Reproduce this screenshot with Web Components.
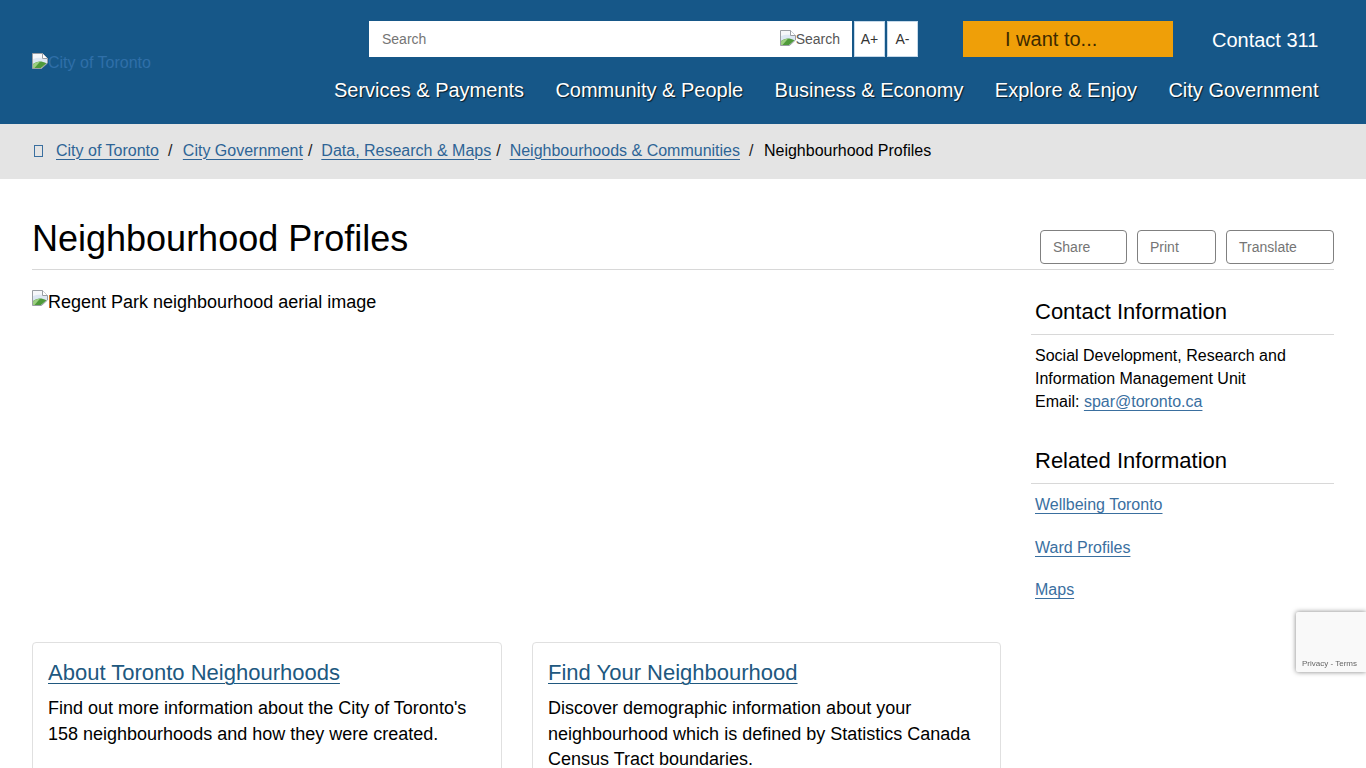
<!DOCTYPE html>
<html lang="en">
<head>
<meta charset="utf-8">
<title>Neighbourhood Profiles</title>
<style>
  html, body { margin: 0; height: 768px; overflow: hidden; background: white; }
  body { font-family: "Liberation Sans", Arial, sans-serif; color: #000; }
</style>
</head>
<body>
<site-header></site-header>
<bread-crumbs></bread-crumbs>
<page-title heading="Neighbourhood Profiles"></page-title>
<page-main>
  <broken-image slot="hero" alt="Regent Park neighbourhood aerial image"></broken-image>
  <info-card slot="cards" heading="About Toronto Neighourhoods">Find out more information about the City of Toronto's 158 neighbourhoods and how they were created.</info-card>
  <info-card slot="cards" heading="Find Your Neighbourhood">Discover demographic information about your neighbourhood which is defined by Statistics Canada Census Tract boundaries.</info-card>
  <side-block slot="side" heading="Contact Information">
    <div class="contact">Social Development, Research and Information Management Unit<br>Email: <a href="#" style="color:#3a6f9f;text-decoration-thickness:1px;text-underline-offset:3px">spar@toronto.ca</a></div>
  </side-block>
  <side-block slot="side" heading="Related Information">
    <side-link>Wellbeing Toronto</side-link>
    <side-link>Ward Profiles</side-link>
    <side-link>Maps</side-link>
  </side-block>
</page-main>
<recaptcha-badge></recaptcha-badge>

<script>
class BrokenImage extends HTMLElement {
  constructor() {
    super();
    this.attachShadow({mode: 'open'});
  }

  connectedCallback() {
    this.shadowRoot.innerHTML = `
      <style>
        :host { display: inline-block; white-space: nowrap; }
        svg { width: 16px; height: 16px; vertical-align: var(--icon-shift, 2px); margin-top: -6px; }
      </style>
      <svg viewBox="0 0 16 16">
        <path d="M0.5 0.5H10.5L15.5 5.5V10L9.5 15.5H0.5Z" fill="#dde7f3" stroke="#9a9ea4"/>
        <path d="M1 1H10V5.5H15V6C11 4.5 6 4 1 6Z" fill="#f6f7fa"/>
        <path d="M10.5 0.5V5.5H15.5" fill="#fff" stroke="#9a9ea4"/>
        <path d="M1 15V11C5 8 9 7.5 14.5 10.2L9 15Z" fill="#4f9a3a"/>
        <path d="M1 11.5C3 9.8 5 9 8 8.8L2.5 15H1Z" fill="#9ccf80"/>
      </svg>${this.getAttribute('alt')}
    `;
  }
}

class SiteHeader extends HTMLElement {
  constructor() {
    super();
    this.attachShadow({mode: 'open'});
  }

  connectedCallback() {
    this.shadowRoot.innerHTML = `
      <style>
        :host { display: flex; height: 124px; background: #165788; box-sizing: border-box; padding: 21px 32px 0; }
        .logo { margin-top: 32px; font-size: 16px; color: #2f6fa8; width: 302px; flex: none; line-height: 20px; --icon-shift: -1px; }
        .right { flex: 1; min-width: 0; }
        .top { display: flex; height: 36px; padding-left: 35px; }
        .search { width: 483px; flex: none; background: white; display: flex; align-items: center; justify-content: space-between; box-sizing: border-box; padding: 0 12px 0 13px; font-size: 14px; color: #757575; }
        .search broken-image { color: #555; --icon-shift: -2px; margin-left: -1px; }
        .search svg { margin-left: -1px; }
        .size { width: 31px; flex: none; margin-left: 2px; background: white; border: 1px solid #c5d9ea; box-sizing: border-box; display: flex; align-items: center; justify-content: center; font-size: 14px; color: #333; }
        .want { width: 210px; flex: none; margin-left: 45px; background: #ef9f08; box-sizing: border-box; padding-left: 42px; font-size: 20px; line-height: 36px; color: #3d2a00; }
        .contact { margin-left: 39px; font-size: 20px; line-height: 38px; color: white; }
        nav { display: flex; gap: 31.3px; margin-top: 20px; font-size: 20px; line-height: 26px; color: white; text-shadow: 1px 1px 1px rgba(0,0,0,.7); white-space: nowrap; }
      </style>
      <div class="logo"><broken-image alt="City of Toronto"></broken-image></div>
      <div class="right">
        <div class="top">
          <div class="search"><span>Search</span><broken-image alt="Search"></broken-image></div>
          <div class="size">A+</div>
          <div class="size">A-</div>
          <div class="want">I want to...</div>
          <div class="contact">Contact 311</div>
        </div>
        <nav>
          <span>Services &amp; Payments</span>
          <span>Community &amp; People</span>
          <span>Business &amp; Economy</span>
          <span>Explore &amp; Enjoy</span>
          <span>City Government</span>
        </nav>
      </div>
    `;
  }
}

class BreadCrumbs extends HTMLElement {
  constructor() {
    super();
    this.attachShadow({mode: 'open'});
  }

  connectedCallback() {
    this.shadowRoot.innerHTML = `
      <style>
        :host { display: flex; align-items: center; height: 53px; padding-bottom: 2px; background: #e4e4e4; padding-left: 34px; font-size: 16px; white-space: nowrap; color: #222; }
        .home { width: 7px; height: 10px; border: 1px solid #3a6f9f; margin-right: 13px; flex: none; }
        a { color: #2e6496; text-decoration: underline; text-decoration-thickness: 1px; text-underline-offset: 3px; }
        .sep { margin-left: 9px; margin-right: 10.5px; }
        .tight { margin-left: 5px; margin-right: 9px; }
        .now { color: #000; }
      </style>
      <span class="home"></span>
      <a href="#">City of Toronto</a><span class="sep">/</span>
      <a href="#">City Government</a><span class="tight">/</span>
      <a href="#">Data, Research &amp; Maps</a><span class="tight">/</span>
      <a href="#">Neighbourhoods &amp; Communities</a><span class="sep">/</span>
      <span class="now">Neighbourhood Profiles</span>
    `;
  }
}

class PageTitle extends HTMLElement {
  constructor() {
    super();
    this.attachShadow({mode: 'open'});
  }

  connectedCallback() {
    this.shadowRoot.innerHTML = `
      <style>
        :host { display: flex; justify-content: space-between; margin: 0 32px; height: 91px; box-sizing: border-box; border-bottom: 1px solid #d8d8d8; padding-top: 39px; }
        h1 { margin: 0; font-size: 36px; font-weight: 400; line-height: 41px; }
        .actions { display: flex; gap: 10px; margin-top: 12px; }
        .actions span { height: 34px; box-sizing: border-box; border: 1px solid #808080; border-radius: 4px; padding-left: 12px; font-size: 14px; line-height: 32px; color: #757575; }
      </style>
      <h1>${this.getAttribute('heading')}</h1>
      <div class="actions">
        <span style="width:87px">Share</span>
        <span style="width:79px">Print</span>
        <span style="width:108px">Translate</span>
      </div>
    `;
  }
}

class PageMain extends HTMLElement {
  constructor() {
    super();
    this.attachShadow({mode: 'open'});
  }

  connectedCallback() {
    this.shadowRoot.innerHTML = `
      <style>
        :host { display: flex; margin: 0 32px; padding-top: 20px; }
        .left { width: 969px; flex: none; }
        .hero { height: 352px; font-size: 18px; line-height: 24px; }
        .cards { display: grid; grid-template-columns: 470px 469px; gap: 30px; }
        .side { margin-left: 30px; width: 303px; flex: none; }
      </style>
      <div class="left">
        <div class="hero"><slot name="hero"></slot></div>
        <div class="cards"><slot name="cards"></slot></div>
      </div>
      <div class="side"><slot name="side"></slot></div>
    `;
  }
}

class InfoCard extends HTMLElement {
  constructor() {
    super();
    this.attachShadow({mode: 'open'});
  }

  connectedCallback() {
    this.shadowRoot.innerHTML = `
      <style>
        :host { display: block; border: 1px solid #e0e0e0; border-radius: 4px; padding: 15px; height: 180px; box-sizing: border-box; }
        a { display: block; font-size: 22px; line-height: 30px; color: #20587f; text-decoration: underline; text-decoration-thickness: 1px; text-underline-offset: 3px; }
        p { margin: 8px 0 0; font-size: 18px; line-height: 25.7px; }
      </style>
      <a href="#">${this.getAttribute('heading')}</a>
      <p><slot></slot></p>
    `;
  }
}

class SideBlock extends HTMLElement {
  constructor() {
    super();
    this.attachShadow({mode: 'open'});
  }

  connectedCallback() {
    this.shadowRoot.innerHTML = `
      <style>
        :host { display: block; margin-bottom: 26px; font-size: 16px; line-height: 23px; }
        h2 { margin: 0 0 9px; padding: 7px 0 7px 4px; border-bottom: 1px solid #d8d8d8; font-size: 22px; line-height: 30px; font-weight: 400; }
        .body { padding-left: 4px; }
      </style>
      <h2>${this.getAttribute('heading')}</h2>
      <div class="body"><slot></slot></div>
    `;
  }
}

class SideLink extends HTMLElement {
  constructor() {
    super();
    this.attachShadow({mode: 'open'});
  }

  connectedCallback() {
    this.shadowRoot.innerHTML = `
      <style>
        :host { display: block; margin-bottom: 19.5px; }
        a { color: #3a6f9f; text-decoration: underline; text-decoration-thickness: 1px; text-underline-offset: 3px; }
      </style>
      <a href="#"><slot></slot></a>
    `;
  }
}

class RecaptchaBadge extends HTMLElement {
  constructor() {
    super();
    this.attachShadow({mode: 'open'});
  }

  connectedCallback() {
    this.shadowRoot.innerHTML = `
      <style>
        :host { position: fixed; right: 0; top: 612px; width: 70px; height: 60px; box-sizing: border-box; background: #f9f9f9; box-shadow: 0 0 5px rgba(0,0,0,.5); border-radius: 2px 0 0 2px; padding: 47px 0 0 6px; font-size: 8px; line-height: 10px; color: #666; white-space: nowrap; }
      </style>
      Privacy - Terms
    `;
  }
}

customElements.define('broken-image', BrokenImage);
customElements.define('site-header', SiteHeader);
customElements.define('bread-crumbs', BreadCrumbs);
customElements.define('page-title', PageTitle);
customElements.define('page-main', PageMain);
customElements.define('info-card', InfoCard);
customElements.define('side-block', SideBlock);
customElements.define('side-link', SideLink);
customElements.define('recaptcha-badge', RecaptchaBadge);
</script>
</body>
</html>
